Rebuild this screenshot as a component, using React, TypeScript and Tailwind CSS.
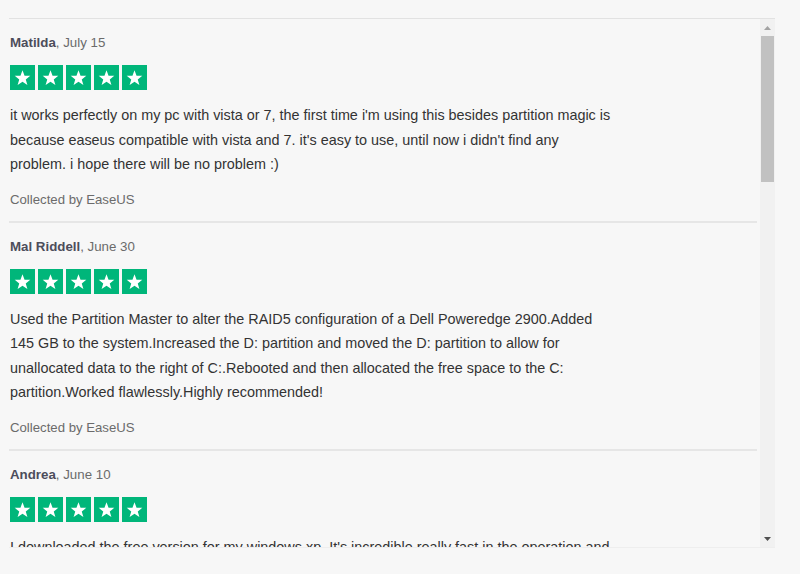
import React from 'react'

const reviews = [
  {
    name: 'Matilda',
    date: 'July 15',
    text: "it works perfectly on my pc with vista or 7, the first time i'm using this besides partition magic is because easeus compatible with vista and 7. it's easy to use, until now i didn't find any problem. i hope there will be no problem :)",
  },
  {
    name: 'Mal Riddell',
    date: 'June 30',
    text: 'Used the Partition Master to alter the RAID5 configuration of a Dell Poweredge 2900.Added 145 GB to the system.Increased the D: partition and moved the D: partition to allow for unallocated data to the right of C:.Rebooted and then allocated the free space to the C: partition.Worked flawlessly.Highly recommended!',
  },
  {
    name: 'Andrea',
    date: 'June 10',
    text: "I downloaded the free version for my windows xp. It's incredible really fast in the operation and very easy to use. I recommend it to everyone who needs to resize partitions.",
  },
]

function Star() {
  return (
    <div className="w-[25px] h-[25px] bg-[#00b67a] flex items-center justify-center">
      <svg width="17" height="17" viewBox="0 0 24 24">
        <path
          fill="#fff"
          d="M12 1.8l2.9 7.6 8.1.3-6.4 5 2.3 7.8L12 17.9l-6.9 4.6 2.3-7.8-6.4-5 8.1-.3z"
        />
      </svg>
    </div>
  )
}

function Review({ name, date, text, last }: { name: string; date: string; text: string; last?: boolean }) {
  return (
    <div className={`pt-[14px] pl-px ${last ? '' : 'pb-[11px] border-b-2 border-[#e6e6e6]'}`}>
      <div className="text-[13.3px] leading-5 text-[#6b6b6b]">
        <span className="font-bold text-[#4d4d5b]">{name}</span>, {date}
      </div>
      <div className="flex gap-[3px] mt-[12px]">
        {[0, 1, 2, 3, 4].map((i) => (
          <Star key={i} />
        ))}
      </div>
      <p className="mt-[13px] max-w-[601.5px] text-[14.4px] leading-[24.5px] text-[#333]">{text}</p>
      <div className="mt-[13px] text-[13.2px] leading-5 text-[#6b6b6b]">Collected by EaseUS</div>
    </div>
  )
}

export default function App() {
  return (
    <div
      className="w-[800px] h-[574px] bg-[#f7f7f7] pt-[18px] pl-[9px]"
      style={{ fontFamily: '"Liberation Sans", Arial, sans-serif' }}
    >
      <div className="w-[766px] h-[530px] flex border-t border-[#e2e2e2] border-b border-b-[#eeeeee]">
        <div className="flex-1 overflow-hidden pr-[3px]">
          {reviews.map((r, i) => (
            <Review key={r.name} {...r} last={i === reviews.length - 1} />
          ))}
        </div>
        <div className="w-[15px] bg-[#f1f1f1] flex flex-col">
          <div className="h-[17px] flex items-center justify-center">
            <svg width="7" height="4" viewBox="0 0 7 4">
              <path d="M3.5 0L7 4H0z" fill="#a3a3a3" />
            </svg>
          </div>
          <div className="mx-px h-[146px] bg-[#c1c1c1]" />
          <div className="flex-1" />
          <div className="h-[17px] flex items-center justify-center">
            <svg width="7" height="4" viewBox="0 0 7 4">
              <path d="M0 0h7L3.5 4z" fill="#505050" />
            </svg>
          </div>
        </div>
      </div>
    </div>
  )
}
